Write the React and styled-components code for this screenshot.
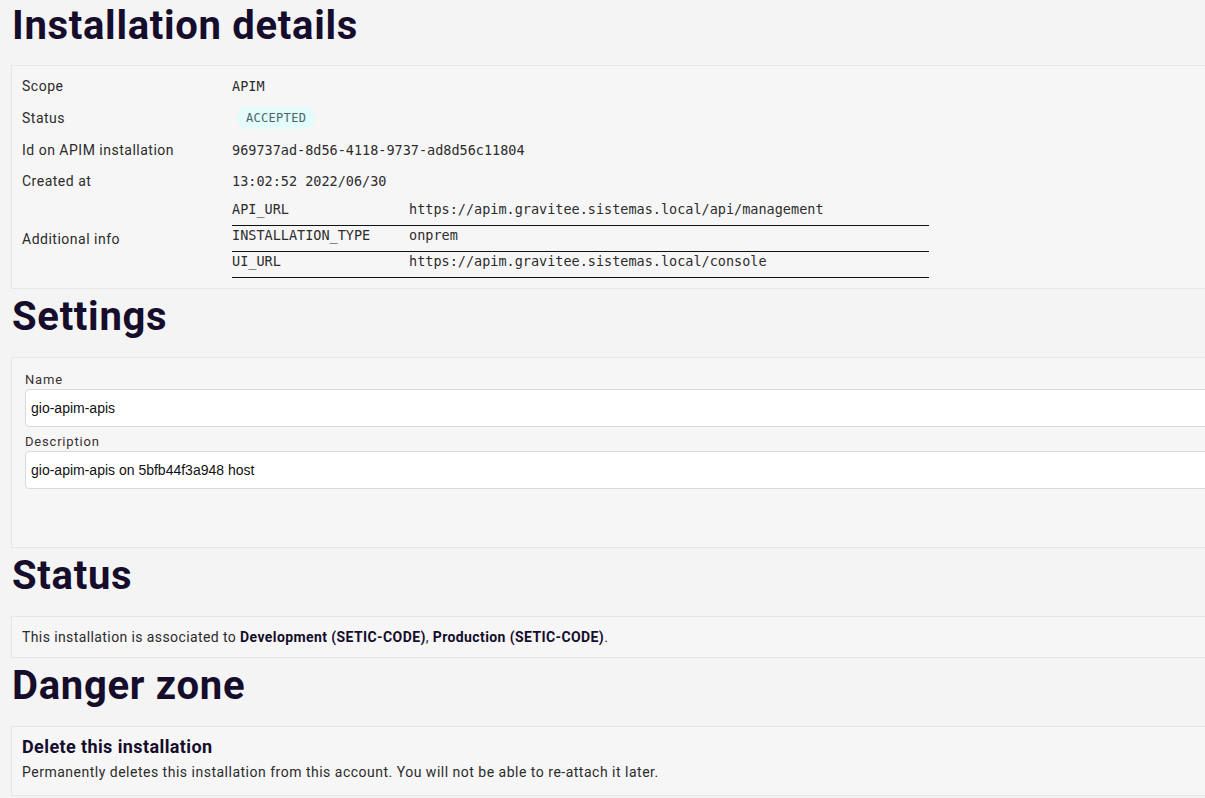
import React from 'react';
import styled, { createGlobalStyle } from 'styled-components';

const GlobalStyle = createGlobalStyle`
  html, body {
    margin: 0;
    padding: 0;
    background: #f4f4f4;
    overflow: hidden;
  }
  body {
    font-family: Roboto, "Liberation Sans", sans-serif;
    color: #2b2b2b;
  }
`;

const Page = styled.main`
  width: 1260px;
  padding: 0 0 0 11px;
`;

const Heading = styled.h1`
  margin: ${(p) => (p.$first ? '2px' : '4px')} 0 ${(p) => (p.$first ? '15px' : '16px')} 1px;
  font-size: 40px;
  line-height: 48px;
  font-weight: 700;
  color: #150d2b;
  letter-spacing: 0.7px;
`;

const Card = styled.section`
  background: #f6f6f6;
  border: 1px solid #e6e6e6;
  padding: ${(p) => p.$padding || '10px'};
`;

const InfoRow = styled.div`
  display: grid;
  grid-template-columns: 210px 1fr;
  align-items: center;
  min-height: ${(p) => p.$height || 32}px;
  padding-top: ${(p) => p.$top || 0}px;
`;

const Label = styled.span`
  font-size: 14px;
  color: #2b2b2b;
  letter-spacing: 0.5px;
`;

const Mono = styled.span`
  font-family: "DejaVu Sans Mono", "Liberation Mono", monospace;
  font-size: 13.5px;
  color: #2d2d2d;
`;

const Badge = styled.span`
  justify-self: start;
  margin-left: 5px;
  height: 22px;
  line-height: 22px;
  padding: 0 9px;
  border-radius: 11px;
  background: #e3fbfb;
  color: #4d6767;
  font-family: "DejaVu Sans Mono", "Liberation Mono", monospace;
  font-size: 12px;
  letter-spacing: 0.3px;
`;

const MetaTable = styled.table`
  width: 697px;
  border-collapse: collapse;
`;

const MetaCell = styled.td`
  padding: 1px 0 8px;
  line-height: 16px;
  border-bottom: 1px solid #111;
  width: ${(p) => p.$width || 'auto'};
  font-family: "DejaVu Sans Mono", "Liberation Mono", monospace;
  font-size: 13.5px;
  color: #2d2d2d;
  vertical-align: top;
`;

const FieldLabel = styled.label`
  display: block;
  font-size: 13px;
  line-height: 16px;
  letter-spacing: 0.8px;
  color: #3a2f33;
  margin-top: ${(p) => p.$top || 0}px;
`;

const TextInput = styled.input`
  display: block;
  box-sizing: border-box;
  width: 1240px;
  height: 38px;
  margin-top: 1px;
  padding: 0 5px;
  border: 1px solid #d9d9d9;
  border-radius: 4px;
  background: #fff;
  font-family: "Liberation Sans", Arial, sans-serif;
  font-size: 14px;
  color: #111;
  outline: none;
`;

const Paragraph = styled.p`
  margin: 0;
  font-size: 14px;
  line-height: 20px;
  letter-spacing: 0.4px;
  color: #2b2b2b;
  b {
    font-weight: 700;
    color: #150d2b;
  }
`;

const SubHeading = styled.h3`
  margin: 0 0 6px;
  font-size: 18px;
  line-height: 20px;
  font-weight: 700;
  letter-spacing: 0.4px;
  color: #150d2b;
`;

const SmallText = styled.p`
  margin: 0;
  font-size: 14px;
  line-height: 18px;
  letter-spacing: 0.5px;
  color: #2b2b2b;
`;

const meta = [
  ['API_URL', 'https://apim.gravitee.sistemas.local/api/management'],
  ['INSTALLATION_TYPE', 'onprem'],
  ['UI_URL', 'https://apim.gravitee.sistemas.local/console'],
];

export default function App() {
  return (
    <Page>
      <GlobalStyle />
      <Heading $first>Installation details</Heading>
      <Card $padding="4px 10px 10px">
        <InfoRow>
          <Label>Scope</Label>
          <Mono>APIM</Mono>
        </InfoRow>
        <InfoRow>
          <Label>Status</Label>
          <Badge>ACCEPTED</Badge>
        </InfoRow>
        <InfoRow>
          <Label>Id on APIM installation</Label>
          <Mono>969737ad-8d56-4118-9737-ad8d56c11804</Mono>
        </InfoRow>
        <InfoRow $height={30}>
          <Label>Created at</Label>
          <Mono>13:02:52 2022/06/30</Mono>
        </InfoRow>
        <InfoRow $top={4}>
          <Label>Additional info</Label>
          <MetaTable>
            <tbody>
              {meta.map(([k, v]) => (
                <tr key={k}>
                  <MetaCell $width="177px">{k}</MetaCell>
                  <MetaCell>{v}</MetaCell>
                </tr>
              ))}
            </tbody>
          </MetaTable>
        </InfoRow>
      </Card>

      <Heading as="h2">Settings</Heading>
      <Card $padding="14px 0 58px 13px">
        <FieldLabel>Name</FieldLabel>
        <TextInput defaultValue="gio-apim-apis" />
        <FieldLabel $top={7}>Description</FieldLabel>
        <TextInput defaultValue="gio-apim-apis on 5bfb44f3a948 host" />
      </Card>

      <Heading as="h2">Status</Heading>
      <Card>
        <Paragraph>
          This installation is associated to <b>Development (SETIC-CODE)</b>, <b>Production (SETIC-CODE)</b>.
        </Paragraph>
      </Card>

      <Heading as="h2">Danger zone</Heading>
      <Card $padding="10px 10px 14px">
        <SubHeading>Delete this installation</SubHeading>
        <SmallText>
          Permanently deletes this installation from this account. You will not be able to re-attach it later.
        </SmallText>
      </Card>
    </Page>
  );
}
